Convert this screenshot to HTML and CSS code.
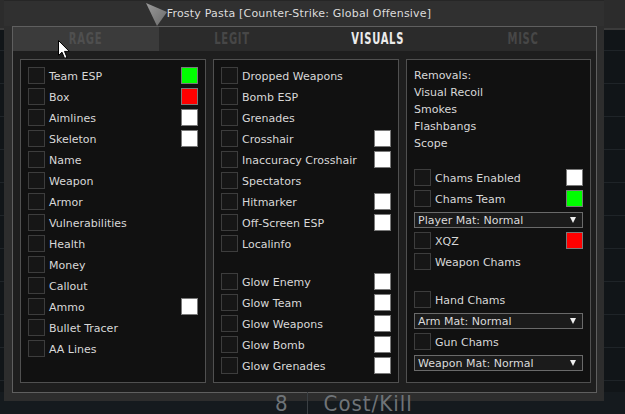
FILE: index.html
```html
<!DOCTYPE html>
<html lang="en">
<head>
    <meta charset="UTF-8">
    <title>Frosty Pasta</title>
    <link rel="stylesheet" href="styles.css">
</head>
<body>
<div class="scene">
    <div class="hud-top"></div>
    <div class="hud-rows"></div>
    <div class="hud-bottom">
        <span class="stat-num">8</span>
        <span class="stat-sep"></span>
        <span class="stat-label">Cost/Kill</span>
    </div>

    <div class="menu">
        <div class="menu-title">Frosty Pasta [Counter-Strike: Global Offensive]</div>
        <div class="frame">
            <div class="tabs">
                <div class="tab tab-hover"><span>RAGE</span></div>
                <div class="tab"><span>LEGIT</span></div>
                <div class="tab tab-active"><span>VISUALS</span></div>
                <div class="tab"><span>MISC</span></div>
            </div>
            <div class="content">

                <!-- players -->
                <div class="group">
                    <div class="row"><span class="check"></span><span class="label">Team ESP</span><span class="swatch green"></span></div>
                    <div class="row"><span class="check"></span><span class="label">Box</span><span class="swatch red"></span></div>
                    <div class="row"><span class="check"></span><span class="label">Aimlines</span><span class="swatch"></span></div>
                    <div class="row"><span class="check"></span><span class="label">Skeleton</span><span class="swatch"></span></div>
                    <div class="row"><span class="check"></span><span class="label">Name</span></div>
                    <div class="row"><span class="check"></span><span class="label">Weapon</span></div>
                    <div class="row"><span class="check"></span><span class="label">Armor</span></div>
                    <div class="row"><span class="check"></span><span class="label">Vulnerabilities</span></div>
                    <div class="row"><span class="check"></span><span class="label">Health</span></div>
                    <div class="row"><span class="check"></span><span class="label">Money</span></div>
                    <div class="row"><span class="check"></span><span class="label">Callout</span></div>
                    <div class="row"><span class="check"></span><span class="label">Ammo</span><span class="swatch"></span></div>
                    <div class="row"><span class="check"></span><span class="label">Bullet Tracer</span></div>
                    <div class="row"><span class="check"></span><span class="label">AA Lines</span></div>
                </div>

                <!-- world / glow -->
                <div class="group">
                    <div class="row"><span class="check"></span><span class="label">Dropped Weapons</span></div>
                    <div class="row"><span class="check"></span><span class="label">Bomb ESP</span></div>
                    <div class="row"><span class="check"></span><span class="label">Grenades</span></div>
                    <div class="row"><span class="check"></span><span class="label">Crosshair</span><span class="swatch"></span></div>
                    <div class="row"><span class="check"></span><span class="label">Inaccuracy Crosshair</span><span class="swatch"></span></div>
                    <div class="row"><span class="check"></span><span class="label">Spectators</span></div>
                    <div class="row"><span class="check"></span><span class="label">Hitmarker</span><span class="swatch"></span></div>
                    <div class="row"><span class="check"></span><span class="label">Off-Screen ESP</span><span class="swatch"></span></div>
                    <div class="row"><span class="check"></span><span class="label">Localinfo</span></div>
                    <div class="spacer"></div>
                    <div class="row"><span class="check"></span><span class="label">Glow Enemy</span><span class="swatch"></span></div>
                    <div class="row"><span class="check"></span><span class="label">Glow Team</span><span class="swatch"></span></div>
                    <div class="row"><span class="check"></span><span class="label">Glow Weapons</span><span class="swatch"></span></div>
                    <div class="row"><span class="check"></span><span class="label">Glow Bomb</span><span class="swatch"></span></div>
                    <div class="row"><span class="check"></span><span class="label">Glow Grenades</span><span class="swatch"></span></div>
                </div>

                <!-- removals / chams -->
                <div class="group">
                    <div class="text-list">
                        <div>Removals:</div>
                        <div>Visual Recoil</div>
                        <div>Smokes</div>
                        <div>Flashbangs</div>
                        <div>Scope</div>
                    </div>
                    <div class="spacer small"></div>
                    <div class="row"><span class="check"></span><span class="label">Chams Enabled</span><span class="swatch"></span></div>
                    <div class="row"><span class="check"></span><span class="label">Chams Team</span><span class="swatch green"></span></div>
                    <div class="select">Player Mat: Normal<span class="arrow"></span></div>
                    <div class="row"><span class="check"></span><span class="label">XQZ</span><span class="swatch red"></span></div>
                    <div class="row"><span class="check"></span><span class="label">Weapon Chams</span></div>
                    <div class="spacer"></div>
                    <div class="row"><span class="check"></span><span class="label">Hand Chams</span></div>
                    <div class="select">Arm Mat: Normal<span class="arrow"></span></div>
                    <div class="row"><span class="check"></span><span class="label">Gun Chams</span></div>
                    <div class="select">Weapon Mat: Normal<span class="arrow"></span></div>
                </div>

            </div>
        </div>
    </div>

    <svg class="pointer" width="24" height="26" viewBox="0 0 24 26">
        <defs>
            <linearGradient id="pg" x1="0" y1="0" x2="1" y2="1">
                <stop offset="0" stop-color="#9a9a9a"/>
                <stop offset="1" stop-color="#6a6a6a"/>
            </linearGradient>
        </defs>
        <polygon points="1,2 22,11 12,25" fill="url(#pg)"/>
    </svg>

    <svg class="cursor" width="13" height="20" viewBox="0 0 13 20">
        <path d="M0.5 0.5 L0.5 15.5 L4 12.2 L6.6 18.4 L9 17.4 L6.5 11.4 L11.3 11.4 Z" fill="#fff" stroke="#000" stroke-width="1"/>
    </svg>
</div>
</body>
</html>
```

FILE: styles.css
```css
* {
    margin: 0;
    padding: 0;
    box-sizing: border-box;
}
body {
    background: #121619;
    overflow: hidden;
    font-family: "DejaVu Sans", Verdana, sans-serif;
    -webkit-user-select: none;
    user-select: none;
}
.scene {
    position: relative;
    width: 625px;
    height: 414px;
    display: flex;
    flex-direction: column;
    overflow: hidden;
    background: #151a1e;
}

/* game hud behind the menu */
.hud-top {
    height: 30px;
    background: #2c2c2c;
    border-bottom: 2px solid #3b3b3b;
}
.hud-rows {
    flex: 1;
    background: repeating-linear-gradient(to bottom, #111518 0, #111518 20px, #1f2428 20px, #1f2428 21px, #111518 21px, #111518 33px);
}
.hud-bottom {
    position: relative;
    z-index: 2;
    height: 22px;
    display: flex;
    align-items: flex-start;
    padding-left: 275px;
    color: #6f7478;
    font-family: "DejaVu Sans Condensed", "DejaVu Sans", sans-serif;
    font-size: 22px;
    line-height: 24px;
    letter-spacing: 1px;
}
.stat-sep {
    width: 1px;
    height: 22px;
    margin: 0 16px 0 18px;
    background: #3a3f43;
}

/* menu window */
.menu {
    position: absolute;
    left: 4px;
    top: 0;
    width: 600px;
    height: 401px;
    background: #2d2d2d;
    border-top: 1px solid #262626;
    padding: 0 7px 8px 8px;
    display: flex;
    flex-direction: column;
}
.menu-title {
    height: 25px;
    line-height: 25px;
    text-align: center;
    padding-right: 10px;
    font-size: 11px;
    letter-spacing: 0.2px;
    color: #dcdcdc;
    background: #303030;
    margin: 0 -7px 0 -8px;
}
.frame {
    flex: 1;
    border: 1px solid #5f5f5f;
    display: flex;
    flex-direction: column;
}
.tabs {
    height: 24px;
    display: grid;
    grid-template-columns: repeat(4, 1fr);
    background: #2b2b2b;
}
.tab {
    text-align: center;
    line-height: 24px;
    font-family: "DejaVu Sans Condensed", "DejaVu Sans", sans-serif;
    font-weight: bold;
    font-size: 15px;
    letter-spacing: 1px;
    color: #474747;
}
.tab span {
    display: inline-block;
    transform: scaleX(0.74);
}
.tab-hover {
    background: #3b3b3b;
    color: #4f4f4f;
}
.tab-active {
    color: #ececec;
}
.content {
    flex: 1;
    background: #1e1e1e;
    padding: 8px 5px 9px 7px;
    display: grid;
    grid-template-columns: 186px 186px 185px;
    column-gap: 7px;
}
.group {
    background: #111111;
    border: 1px solid #505050;
    padding: 7px;
    display: flex;
    flex-direction: column;
    gap: 4px;
}
.row {
    height: 17px;
    display: flex;
    align-items: center;
}
.check {
    width: 17px;
    height: 17px;
    flex: none;
    border: 1px solid #3d3d3d;
    background: #161616;
}
.label {
    margin-left: 4px;
    font-size: 11px;
    line-height: 15px;
    padding-top: 2px;
    color: #d8d8d8;
    white-space: nowrap;
}
.swatch {
    width: 17px;
    height: 17px;
    flex: none;
    margin-left: auto;
    border: 1px solid #7a7a7a;
    background: #ffffff;
}
.swatch.green {
    background: #00ff00;
}
.swatch.red {
    background: #ff0000;
}
.spacer {
    height: 13px;
}
.spacer.small {
    height: 9px;
}
.text-list {
    font-size: 11px;
    line-height: 17px;
    color: #d8d8d8;
}
.select {
    position: relative;
    height: 16px;
    margin-top: 1px;
    border: 1px solid #6a6a6a;
    background: #1b1b1b;
    padding-left: 3px;
    font-size: 11px;
    line-height: 15px;
    color: #dadada;
    white-space: nowrap;
}
.arrow {
    position: absolute;
    right: 6px;
    top: 4px;
    width: 0;
    height: 0;
    border-left: 3.5px solid transparent;
    border-right: 3.5px solid transparent;
    border-top: 6px solid #f0f0f0;
}

/* overlays: pointer triangle and mouse cursor */
.pointer {
    position: absolute;
    left: 145px;
    top: 1px;
}
.cursor {
    position: absolute;
    left: 58px;
    top: 40px;
}
```
